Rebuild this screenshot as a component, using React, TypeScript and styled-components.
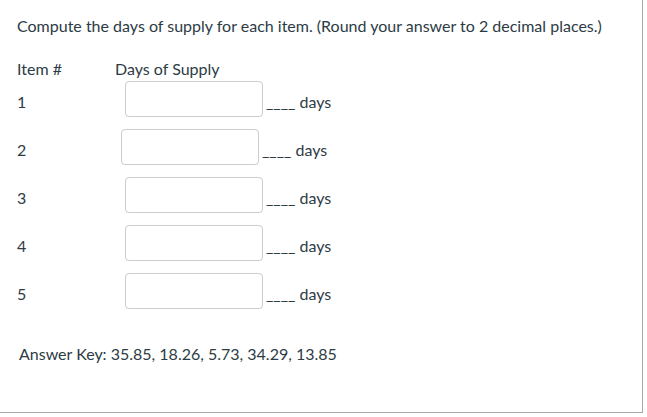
import React from 'react';
import styled, { createGlobalStyle } from 'styled-components';

const GlobalStyle = createGlobalStyle`
  html, body {
    margin: 0;
    padding: 0;
    background: #ffffff;
  }
  body {
    font-family: Lato, "Open Sans", "Liberation Sans", sans-serif;
    color: #2d3b45;
  }
`;

const Panel = styled.div`
  box-sizing: border-box;
  width: 643px;
  height: 413px;
  padding: 14px 0 0 17px;
  border-right: 1px solid #a8a8a8;
  border-bottom: 1px solid #a8a8a8;
  font-size: 16px;
  line-height: 24px;
`;

const Prompt = styled.p`
  margin: 0 0 19px;
`;

const HeaderRow = styled.div`
  display: flex;
  height: 24px;
`;

const ItemCol = styled.div`
  width: 98px;
  flex: none;
`;

const Row = styled.div`
  display: flex;
  align-items: flex-start;
  height: 48px;
`;

const ItemNo = styled.div`
  width: 108px;
  flex: none;
  margin-top: 9px;
`;

const Field = styled.div<{ $shift: number }>`
  display: flex;
  align-items: flex-start;
  margin-left: ${(p) => -p.$shift}px;
`;

const Input = styled.input`
  box-sizing: border-box;
  width: 138px;
  height: 36px;
  margin: 0;
  padding: 0 8px;
  border: 1px solid #c7cdd1;
  border-radius: 4px;
  background: #fff;
  font: inherit;
  color: inherit;
  outline: none;
`;

const Suffix = styled.span`
  margin: 9px 0 0 3px;
  white-space: pre;
`;

const AnswerKey = styled.p`
  margin: 21px 0 0 2px;
`;

const rows = [
  { n: 1, shift: 0 },
  { n: 2, shift: 4 },
  { n: 3, shift: 0 },
  { n: 4, shift: 0 },
  { n: 5, shift: 0 },
];

export default function App() {
  return (
    <>
      <GlobalStyle />
      <Panel>
        <Prompt>
          Compute the days of supply for each item. (Round your answer to 2
          decimal places.)
        </Prompt>
        <HeaderRow>
          <ItemCol>Item #</ItemCol>
          <div>Days of Supply</div>
        </HeaderRow>
        {rows.map((r) => (
          <Row key={r.n}>
            <ItemNo>{r.n}</ItemNo>
            <Field $shift={r.shift}>
              <Input type="text" aria-label={`Item ${r.n} days of supply`} />
              <Suffix>____ days</Suffix>
            </Field>
          </Row>
        ))}
        <AnswerKey>Answer Key: 35.85, 18.26, 5.73, 34.29, 13.85</AnswerKey>
      </Panel>
    </>
  );
}
